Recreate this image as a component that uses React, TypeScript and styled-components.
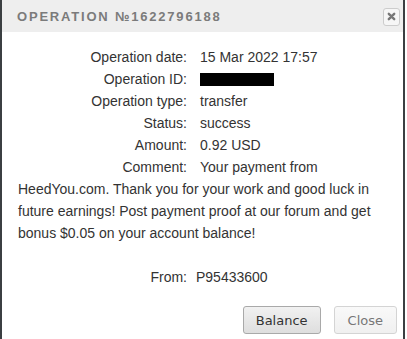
import React from "react";
import styled, { createGlobalStyle } from "styled-components";

const Global = createGlobalStyle`
  html, body { margin: 0; padding: 0; background: #ffffff; }
  body { font-family: "Liberation Sans", Arial, sans-serif; }
`;

const Dialog = styled.div`
  width: 401px;
  height: 339px;
  border-left: 2px solid #3b3f42;
  border-right: 2px solid #3b3f42;
  background: #ffffff;
  display: flex;
  flex-direction: column;
  overflow: hidden;
`;

const Header = styled.div`
  height: 32px;
  flex: none;
  background: #eeeeee;
  display: flex;
  align-items: center;
  justify-content: space-between;
  padding: 0 3px 0 15px;
`;

const Title = styled.div`
  font-family: "Liberation Sans", Arial, sans-serif;
  font-weight: 700;
  font-size: 13px;
  letter-spacing: 1.8px;
  color: #7b7b7b;
  text-transform: uppercase;
`;

const CloseIcon = styled.button`
  width: 17px;
  height: 18px;
  padding: 0;
  border: 1px solid #cccccc;
  border-radius: 3px;
  background: #f6f6f6;
  display: flex;
  align-items: center;
  justify-content: center;
  margin-top: 1px;
`;

const Body = styled.div`
  padding: 14px 16px 0 16px;
  font-family: "Liberation Sans", Arial, sans-serif;
  font-size: 14px;
  line-height: 22px;
  color: #333333;
`;

const Row = styled.div<{ $spaced?: boolean }>`
  margin-top: ${(p) => (p.$spaced ? "22px" : "0")};
`;

const Label = styled.span<{ $gap?: number }>`
  display: inline-block;
  box-sizing: border-box;
  width: ${(p) => 169 + (p.$gap ?? 13)}px;
  padding-right: ${(p) => p.$gap ?? 13}px;
  text-align: right;
`;

const Redacted = styled.span`
  display: inline-block;
  width: 74px;
  height: 13px;
  background: #000000;
  vertical-align: -2px;
`;

const Footer = styled.div`
  display: flex;
  justify-content: flex-end;
  gap: 13px;
  padding: 18px 6px 0 0;
`;

const Button = styled.button<{ $primary?: boolean }>`
  height: 28px;
  box-sizing: border-box;
  padding: 0 ${(p) => (p.$primary ? 12 : 13)}px;
  font-family: "DejaVu Sans", Verdana, sans-serif;
  font-size: 13px;
  border-radius: 3px;
  border: 1px solid ${(p) => (p.$primary ? "#a9a9a9" : "#d4d4d4")};
  color: ${(p) => (p.$primary ? "#333333" : "#777777")};
  background: ${(p) =>
    p.$primary
      ? "linear-gradient(#f1f1f1, #dedede)"
      : "linear-gradient(#f9f9f9, #f0f0f0)"};
`;

export default function App() {
  return (
    <>
      <Global />
      <Dialog>
        <Header>
          <Title>Operation №1622796188</Title>
          <CloseIcon aria-label="close">
            <svg width="9" height="9" viewBox="0 0 9 9">
              <path d="M1.8 1.8 L7.2 7.2 M7.2 1.8 L1.8 7.2" stroke="#777" strokeWidth="2.4" strokeLinecap="round" />
            </svg>
          </CloseIcon>
        </Header>
        <Body>
          <Row><Label>Operation date:</Label>15 Mar 2022 17:57</Row>
          <Row><Label>Operation ID:</Label><Redacted /></Row>
          <Row><Label>Operation type:</Label>transfer</Row>
          <Row><Label>Status:</Label>success</Row>
          <Row><Label>Amount:</Label>0.92 USD</Row>
          <Row>
            <Label>Comment:</Label>Your payment from HeedYou.com. Thank you for your work and good luck in future earnings! Post payment proof at our forum and get bonus $0.05 on your account balance!
          </Row>
          <Row $spaced><Label $gap={9}>From:</Label>P95433600</Row>
        </Body>
        <Footer>
          <Button $primary>Balance</Button>
          <Button>Close</Button>
        </Footer>
      </Dialog>
    </>
  );
}
